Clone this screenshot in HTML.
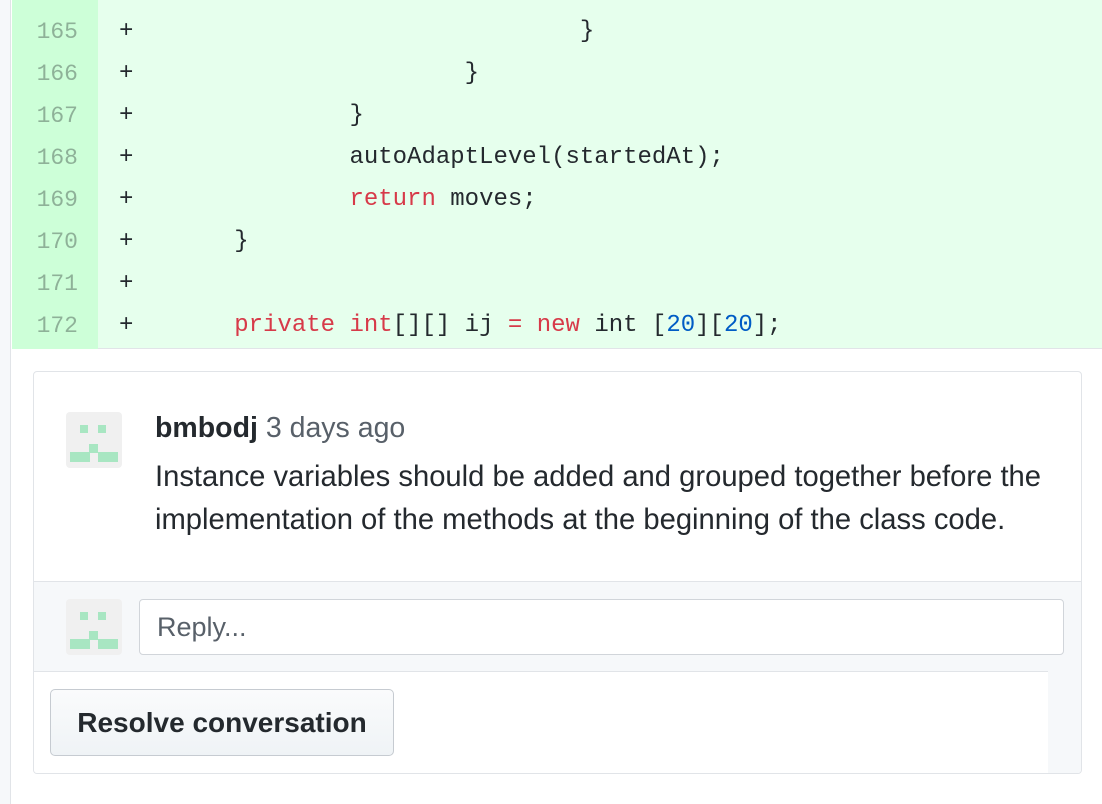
<!DOCTYPE html>
<html><head><meta charset="utf-8"><style>
*{margin:0;padding:0;box-sizing:border-box}
body{width:1102px;height:804px;overflow:hidden;background:#fff;position:relative;font-family:"Liberation Sans",sans-serif}
.strip{position:absolute;left:0;top:0;width:11px;height:804px;background:#f6f8fa;border-right:1px solid #e1e4e8}
.gut{position:absolute;left:12px;top:0;width:86px;height:349px;background:#cdffd8}
.code{position:absolute;left:98px;top:0;width:1004px;height:349px;background:#e6ffed;border-bottom:1px solid #e1e4e8}
.row{position:absolute;left:0;height:42px;line-height:42px;font-family:"Liberation Mono",monospace;font-size:24px;white-space:pre;color:#24292e}
.num{position:absolute;left:12px;width:66px;text-align:right;color:rgba(27,31,35,.35);font-family:"Liberation Mono",monospace;font-size:23px;height:42px;line-height:42px}
.k{color:#d73a49}.n{color:#005cc5}
.box{position:absolute;left:33px;top:371px;width:1049px;height:403px;border:1px solid #e1e4e8;border-radius:4px;overflow:hidden}
.av{position:absolute;width:56px;height:56px;background:#f0f0f0;border-radius:4px}
.av i{position:absolute;background:#a8e6c2}
.name{position:absolute;left:121px;top:39px;font-size:28.5px;line-height:34px;color:#24292e}
.txt{position:absolute;left:121px;top:84px;font-size:29.2px;line-height:43px;color:#24292e;width:945px}
.rep{position:absolute;left:0;top:209px;width:1049px;height:200px;background:#f6f8fa;border-top:1px solid #e1e4e8}
.inp{position:absolute;left:105px;top:17px;width:925px;height:56px;background:#fff;border:1px solid #d1d5da;border-radius:4px;font-size:27px;color:#586069;padding-left:17px;line-height:54px}
.wh{position:absolute;left:0;top:89px;width:1014px;height:120px;background:#fff;border-top:1px solid #e1e4e8}
.btn{position:absolute;left:16px;top:17px;width:344px;height:67px;border:1px solid #c6cbd1;border-radius:5px;background:linear-gradient(#fafbfc,#eff3f6);font-weight:bold;font-size:28px;line-height:65px;text-align:center;color:#24292e}
</style></head><body>
<div class="strip"></div>
<div class="gut"></div>
<div class="code"></div>
<div class="num" style="top:11px">165</div>
<div class="num" style="top:53px">166</div>
<div class="num" style="top:95px">167</div>
<div class="num" style="top:137px">168</div>
<div class="num" style="top:179px">169</div>
<div class="num" style="top:221px">170</div>
<div class="num" style="top:263px">171</div>
<div class="num" style="top:305px">172</div>
<div class="row" style="top:11px;left:119px">+                               }</div>
<div class="row" style="top:53px;left:119px">+                       }</div>
<div class="row" style="top:95px;left:119px">+               }</div>
<div class="row" style="top:137px;left:119px">+               autoAdaptLevel(startedAt);</div>
<div class="row" style="top:179px;left:119px">+               <span class="k">return</span> moves;</div>
<div class="row" style="top:221px;left:119px">+       }</div>
<div class="row" style="top:263px;left:119px">+</div>
<div class="row" style="top:305px;left:119px">+       <span class="k">private</span> <span class="k">int</span>[][] ij <span class="k">=</span> <span class="k">new</span> int [<span class="n">20</span>][<span class="n">20</span>];</div>
<div class="box">
 <div class="av" style="left:32px;top:40px"><i style="left:14px;top:13px;width:8px;height:8px"></i><i style="left:32px;top:13px;width:8px;height:8px"></i><i style="left:23px;top:32px;width:9px;height:9px"></i><i style="left:4px;top:40px;width:20px;height:10px"></i><i style="left:32px;top:40px;width:20px;height:10px"></i></div>
 <div class="name"><b>bmbodj</b> <span style="color:#586069">3 days ago</span></div>
 <div class="txt">Instance variables should be added and grouped together before the implementation of the methods at the beginning of the class code.</div>
 <div class="rep">
  <div class="av" style="left:32px;top:17px"><i style="left:14px;top:13px;width:8px;height:8px"></i><i style="left:32px;top:13px;width:8px;height:8px"></i><i style="left:23px;top:32px;width:9px;height:9px"></i><i style="left:4px;top:40px;width:20px;height:10px"></i><i style="left:32px;top:40px;width:20px;height:10px"></i></div>
  <div class="inp">Reply...</div>
  <div class="wh"><div class="btn">Resolve conversation</div></div>
 </div>
</div>
</body></html>
